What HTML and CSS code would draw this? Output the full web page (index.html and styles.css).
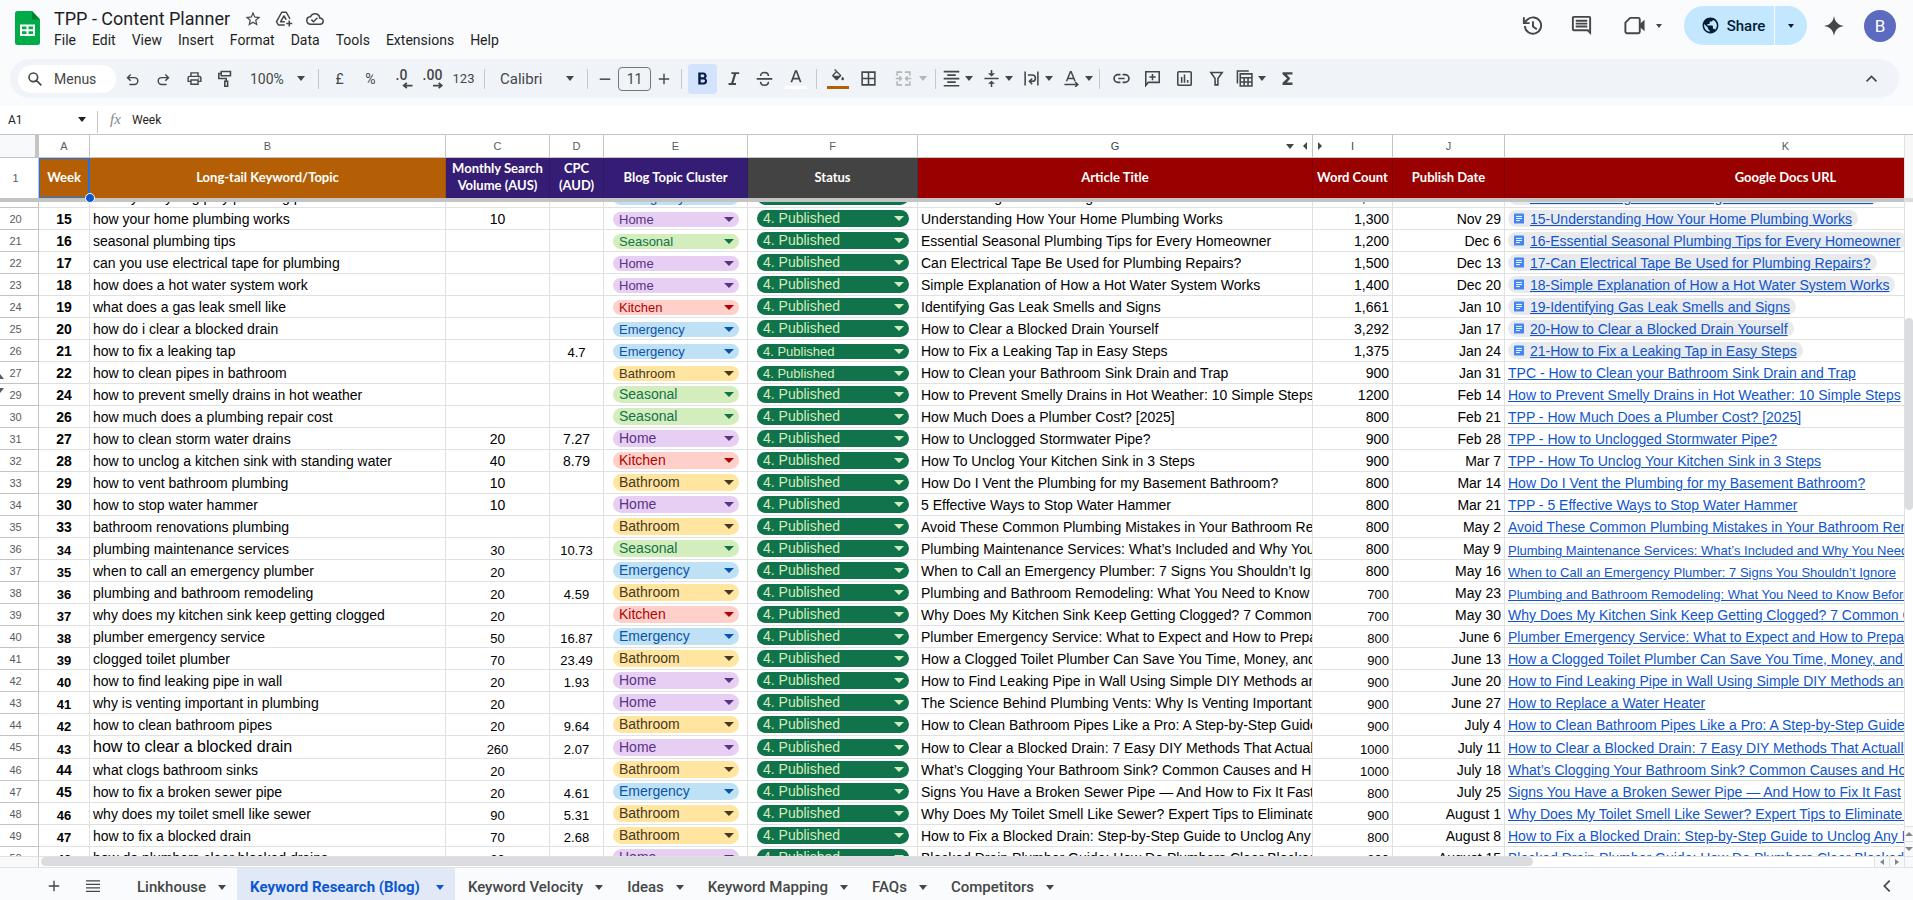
FILE: index.html
```html
<!DOCTYPE html>
<html lang="en">
<head>
<meta charset="utf-8">
<title>TPP - Content Planner</title>
<link rel="stylesheet" href="styles.css">
</head>
<body>
<svg class="sprite" aria-hidden="true">
  <symbol id="star" viewBox="0 0 24 24"><path fill="currentColor" d="M22 9.24l-7.19-.62L12 2 9.19 8.63 2 9.24l5.46 4.73L5.82 21 12 17.27 18.18 21l-1.63-7.03L22 9.24zM12 15.4l-3.76 2.27 1-4.28-3.32-2.88 4.38-.38L12 6.1l1.71 4.04 4.38.38-3.32 2.88 1 4.28L12 15.4z"/></symbol>
  <symbol id="drive" viewBox="0 0 24 24"><g fill="none" stroke="currentColor" stroke-width="2" stroke-linejoin="round"><path d="M13 20H4.500L2 15.500 9 3h6l5 9"/><path d="M13 15.500H7.500L12 8l3 5"/><path d="M19 14v8M15 18h8"/></g></symbol>
  <symbol id="cloud" viewBox="0 0 24 24"><path fill="currentColor" d="M19.350 10.040A7.490 7.490 0 0 0 12 4C9.110 4 6.600 5.640 5.350 8.040A5.994 5.994 0 0 0 0 14c0 3.310 2.690 6 6 6h13c2.760 0 5-2.240 5-5 0-2.640-2.050-4.780-4.650-4.960zM19 18H6c-2.210 0-4-1.790-4-4 0-2.050 1.530-3.760 3.560-3.970l1.070-.110.500-.950A5.469 5.469 0 0 1 12 6c2.620 0 4.880 1.860 5.390 4.430l.300 1.500 1.530.110A2.980 2.980 0 0 1 22 15c0 1.650-1.350 3-3 3zm-9-3.820l-2.090-2.090L6.500 13.500 10 17l6.010-6.010-1.410-1.410z"/></symbol>
  <symbol id="history" viewBox="0 0 24 24"><g fill="none" stroke="currentColor" stroke-width="2"><path d="M4 12.500A8.500 8.500 0 1 0 6.500 6L3.500 9"/><path d="M3 3.500V9.500H9"/><path d="M12.500 7.500V13l4 3"/></g></symbol>
  <symbol id="comment" viewBox="0 0 24 24"><path fill="currentColor" d="M22 4a2 2 0 0 0-2-2H4a2 2 0 0 0-2 2v12a2 2 0 0 0 2 2h14l4 4V4zm-2 0v13l-1-1H4V4h16zM6 12h12v2H6zm0-3h12v2H6zm0-3h12v2H6z"/></symbol>
  <symbol id="video" viewBox="0 0 24 24"><path fill="none" stroke="currentColor" stroke-width="2" stroke-linejoin="round" d="M7.500 4H16a1.500 1.500 0 0 1 1.500 1.500v13A1.500 1.500 0 0 1 16 20H4a1.500 1.500 0 0 1-1.500-1.500V9z"/><path fill="currentColor" d="M17.500 10.500l5-4.500v12l-5-4.500z"/></symbol>
  <symbol id="globe" viewBox="0 0 24 24"><path fill="currentColor" d="M12 2C6.480 2 2 6.480 2 12s4.480 10 10 10 10-4.480 10-10S17.520 2 12 2zm-1 17.930c-3.950-.490-7-3.850-7-7.930 0-.620.080-1.210.210-1.790L9 15v1c0 1.100.900 2 2 2v1.930zm6.900-2.540c-.260-.810-1-1.390-1.900-1.390h-1v-3c0-.550-.450-1-1-1H8v-2h2c.550 0 1-.450 1-1V7h2c1.100 0 2-.900 2-2v-.410c2.930 1.190 5 4.060 5 7.410 0 2.080-.800 3.970-2.100 5.390z"/></symbol>
  <symbol id="spark" viewBox="0 0 24 24"><path fill="currentColor" d="M12 0C13 7 17 11 24 12 17 13 13 17 12 24 11 17 7 13 0 12 7 11 11 7 12 0z"/></symbol>
  <symbol id="search" viewBox="0 0 24 24"><path fill="none" stroke="currentColor" stroke-width="2.400" d="M16 9.500a6.500 6.500 0 1 1-13 0 6.500 6.500 0 0 1 13 0zM14 14l7.500 7.500"/></symbol>
  <symbol id="undo" viewBox="0 0 24 24"><path fill="none" stroke="currentColor" stroke-width="2.300" d="M7 20h8a5 5 0 0 0 0-11H4M9 4L4 9l5 5"/></symbol>
  <symbol id="redo" viewBox="0 0 24 24"><path fill="none" stroke="currentColor" stroke-width="2.300" d="M17 20H9A5 5 0 0 1 9 9h11M15 4l5 5-5 5"/></symbol>
  <symbol id="print" viewBox="0 0 24 24"><path fill="currentColor" d="M19 8h-1V3H6v5H5c-1.660 0-3 1.340-3 3v6h4v4h12v-4h4v-6c0-1.660-1.340-3-3-3zM8 5h8v3H8V5zm8 12v2H8v-4h8v2zm2-2v-2H6v2H4v-4c0-.550.450-1 1-1h14c.550 0 1 .450 1 1v4h-2z"/><circle cx="18" cy="11.500" r="1" fill="currentColor"/></symbol>
  <symbol id="paint" viewBox="0 0 24 24"><path fill="none" stroke="currentColor" stroke-width="2.200" d="M6 2h13v6H6zM6 5H2.500v7H13v4"/><path fill="none" stroke="currentColor" stroke-width="2.200" d="M11 16h4v7h-4z"/></symbol>
  <symbol id="minus" viewBox="0 0 24 24"><path fill="currentColor" d="M3 11h18v2.600H3z"/></symbol>
  <symbol id="plus" viewBox="0 0 24 24"><path fill="currentColor" d="M3 10.800h7.800V3h2.400v7.800H21v2.400h-7.800V21h-2.400v-7.800H3z"/></symbol>
  <symbol id="bold" viewBox="0 0 24 24"><path fill="currentColor" d="M16.200 11.500c1-.800 1.700-2 1.700-3.200C17.900 5.500 15.900 3.500 13.200 3.500H6v17h8c2.500 0 4.500-2 4.500-4.500 0-2-.900-3.500-2.300-4.500zM9.500 6.500h3.300a1.800 1.800 0 0 1 0 3.600H9.500V6.500zm4 11h-4v-4h4a2 2 0 0 1 0 4z"/></symbol>
  <symbol id="italic" viewBox="0 0 24 24"><path fill="currentColor" d="M9 3v2.700h3.600L8.700 18.300H5V21h10.500v-2.700h-3.600l3.900-12.600H20V3z"/></symbol>
  <symbol id="strike" viewBox="0 0 24 24"><path fill="none" stroke="currentColor" stroke-width="2.200" d="M1 12.500h22M17.500 8.500c0-3-2-5-5.500-5s-5.500 2-5.500 5M6.500 16.500c0 3 2 5 5.500 5s5.500-2 5.500-5"/></symbol>
  <symbol id="letter" viewBox="0 0 24 24"><path fill="none" stroke="currentColor" stroke-width="2.500" d="M5 20l6.300-17h1.400L19 20M7.500 14.500h9"/></symbol>
  <symbol id="bucket" viewBox="0 0 24 24"><path fill="currentColor" d="M16.560 8.940L7.620 0 6.210 1.410l2.380 2.380-5.150 5.150a1.490 1.490 0 0 0 0 2.120l5.500 5.500c.290.290.680.440 1.060.440s.770-.150 1.060-.440l5.500-5.500c.590-.580.590-1.530 0-2.120zM5.210 10L10 5.210 14.790 10H5.210zM19 11.500s-2 2.170-2 3.500a2 2 0 0 0 4 0c0-1.330-2-3.500-2-3.500z"/></symbol>
  <symbol id="borders" viewBox="0 0 24 24"><path fill="none" stroke="currentColor" stroke-width="2.200" d="M3 3h18v18H3zM12 3v18M3 12h18"/></symbol>
  <symbol id="merge" viewBox="0 0 24 24"><path fill="none" stroke="currentColor" stroke-width="2.200" d="M10 3H3v5M14 3h7v5M10 21H3v-5M14 21h7v-5M1 12h8M23 12h-8M6 9l3 3-3 3M18 9l-3 3 3 3"/></symbol>
  <symbol id="center" viewBox="0 0 24 24"><path fill="currentColor" d="M1 1h22v2.400H1zM6 6h12v2.400H6zM1 11h22v2.400H1zM6 16h12v2.400H6zM1 21h22v2.400H1z"/></symbol>
  <symbol id="middle" viewBox="0 0 24 24"><path fill="none" stroke="currentColor" stroke-width="2.200" d="M2 12h20M12 0v6M12 24v-6"/><path fill="currentColor" d="M7 4.500h10L12 9zM7 19.500h10L12 15z"/></symbol>
  <symbol id="wrap" viewBox="0 0 24 24"><path fill="none" stroke="currentColor" stroke-width="2.200" d="M3 2v20M21 2v20M7 7h6a4 4 0 0 1 0 9h-3M13 12l-4 4 4 4"/></symbol>
  <symbol id="rotate" viewBox="0 0 24 24"><path fill="none" stroke="currentColor" stroke-width="2.100" d="M5 16L10.500 2.500h1L17 16M7 12h8M2 20.500h18M17 17l4 3.500-4 3.500"/></symbol>
  <symbol id="link" viewBox="0 0 24 24"><path fill="none" stroke="currentColor" stroke-width="2.400" d="M10.500 6.500H7a5.500 5.500 0 0 0 0 11h3.500M13.500 6.500H17a5.500 5.500 0 0 1 0 11h-3.500M7.500 12h9"/></symbol>
  <symbol id="addcomment" viewBox="0 0 24 24"><path fill="none" stroke="currentColor" stroke-width="2.200" d="M2.500 22V2.500h19v15H6zM12 5.500v9M7.500 10h9"/></symbol>
  <symbol id="chart" viewBox="0 0 24 24"><path fill="none" stroke="currentColor" stroke-width="2.200" d="M4 2.500h16a1.500 1.500 0 0 1 1.500 1.500v16a1.500 1.500 0 0 1-1.500 1.500H4A1.500 1.500 0 0 1 2.500 20V4A1.500 1.500 0 0 1 4 2.500zM8 10v8M12 6.500V18M16.500 14v4"/></symbol>
  <symbol id="filter" viewBox="0 0 24 24"><path fill="none" stroke="currentColor" stroke-width="2.200" d="M4 3.500h16L14 12v9h-4v-9z"/></symbol>
  <symbol id="tables" viewBox="0 0 24 24"><path fill="none" stroke="currentColor" stroke-width="2.200" d="M18 1.500H2V19M6 5.500h16.500v17H6zM6 11h16.500M6 17h16.500M11.500 11v11.500M17 11v11.500"/></symbol>
  <symbol id="sigma" viewBox="0 0 24 24"><path fill="currentColor" d="M19 3H5v3l6.500 6L5 18v3h14v-3.500h-8L16 12l-5-5.500h8z"/></symbol>
  <symbol id="up" viewBox="0 0 24 24"><path fill="none" stroke="currentColor" stroke-width="2.400" d="M5 16l7-7 7 7"/></symbol>
  <symbol id="left" viewBox="0 0 24 24"><path fill="none" stroke="currentColor" stroke-width="2.600" d="M16 4l-8 8 8 8"/></symbol>
  <symbol id="list" viewBox="0 0 24 24"><path fill="currentColor" d="M0 2h24v2.400H0zM0 8h24v2.400H0zM0 14h24v2.400H0zM0 20h24v2.400H0z"/></symbol>
  <symbol id="arrowl" viewBox="0 0 24 8"><path fill="none" stroke="currentColor" stroke-width="2" d="M24 4H14M17.500 1L14 4l3.500 3"/></symbol>
  <symbol id="arrowr" viewBox="0 0 24 8"><path fill="none" stroke="currentColor" stroke-width="2" d="M12 4h10M18.500 1L22 4l-3.500 3"/></symbol>
  <symbol id="doc" viewBox="0 0 12 12"><rect width="12" height="12" rx="1" fill="#4285f4"/><path stroke="#fff" stroke-width="1.200" d="M2.500 3.500h7M2.500 6h7M2.500 8.500h4.500"/></symbol>
</svg>

<header class="top">
  <svg class="logo" viewBox="0 0 25 34" aria-hidden="true"><path fill="#00ac47" d="M2.500 0H17l8 8.500V31.500a2.500 2.500 0 0 1-2.500 2.500h-20A2.500 2.500 0 0 1 0 31.500v-29A2.500 2.500 0 0 1 2.500 0z"/><path fill="#00832d" d="M17 0l8 8.500h-8z"/><path fill="#fff" fill-rule="evenodd" d="M5 13.500h15V25H5zM7 15.500v2.700h4.500v-2.700zM13.500 15.500v2.700H18v-2.700zM7 20.300V23h4.500v-2.700zM13.500 20.300V23H18v-2.700z"/></svg>
  <div class="heading">
    <div class="title-line">
      <h1>TPP - Content Planner</h1>
      <button class="mini" aria-label="Star"><svg><use href="#star"/></svg></button>
      <button class="mini" aria-label="Add shortcut to Drive"><svg><use href="#drive"/></svg></button>
      <button class="mini" aria-label="Document status"><svg><use href="#cloud"/></svg></button>
    </div>
    <nav class="menubar">
      <button>File</button><button>Edit</button><button>View</button><button>Insert</button><button>Format</button><button>Data</button><button>Tools</button><button>Extensions</button><button>Help</button>
    </nav>
  </div>
  <div class="actions">
    <button class="act" aria-label="Version history"><svg><use href="#history"/></svg></button>
    <button class="act" aria-label="Comments"><svg><use href="#comment"/></svg></button>
    <button class="act meet" aria-label="Join a call"><svg><use href="#video"/></svg><i class="tri small"></i></button>
    <div class="share">
      <button class="share-main"><svg><use href="#globe"/></svg>Share</button>
      <button class="share-more" aria-label="Share options"><i class="tri small"></i></button>
    </div>
    <button class="act spark" aria-label="Ask Gemini"><svg><use href="#spark"/></svg></button>
    <button class="avatar">B</button>
  </div>
</header>

<div class="toolbar" role="toolbar" aria-label="Main">
  <button class="menus"><svg><use href="#search"/></svg>Menus</button>
  <button class="tool low" aria-label="Undo"><svg><use href="#undo"/></svg></button>
  <button class="tool low" aria-label="Redo"><svg><use href="#redo"/></svg></button>
  <button class="tool" aria-label="Print"><svg><use href="#print"/></svg></button>
  <button class="tool" aria-label="Paint format"><svg><use href="#paint"/></svg></button>
  <label class="pick zoom"><select aria-label="Zoom"><option>100%</option></select><i class="tri"></i></label>
  <span class="sep"></span>
  <button class="tool text">£</button>
  <button class="tool text">%</button>
  <button class="tool dec" aria-label="Decrease decimal places"><span>.0</span><svg><use href="#arrowl"/></svg></button>
  <button class="tool dec" aria-label="Increase decimal places"><span>.00</span><svg><use href="#arrowr"/></svg></button>
  <button class="tool text num">123</button>
  <span class="sep"></span>
  <label class="pick font"><select aria-label="Font"><option>Calibri</option></select><i class="tri"></i></label>
  <span class="sep"></span>
  <button class="tool step" aria-label="Decrease font size"><svg><use href="#minus"/></svg></button>
  <input class="size" aria-label="Font size" value="11">
  <button class="tool step" aria-label="Increase font size"><svg><use href="#plus"/></svg></button>
  <span class="sep"></span>
  <button class="tool on" aria-label="Bold"><svg><use href="#bold"/></svg></button>
  <button class="tool" aria-label="Italic"><svg><use href="#italic"/></svg></button>
  <button class="tool" aria-label="Strikethrough"><svg><use href="#strike"/></svg></button>
  <button class="tool swatch white" aria-label="Text color"><svg><use href="#letter"/></svg></button>
  <span class="sep"></span>
  <button class="tool swatch orange" aria-label="Fill color"><svg><use href="#bucket"/></svg></button>
  <button class="tool" aria-label="Borders"><svg><use href="#borders"/></svg></button>
  <button class="split merge" aria-label="Merge cells" disabled><svg><use href="#merge"/></svg><i class="tri"></i></button>
  <span class="sep"></span>
  <div class="aligns">
    <button class="split" aria-label="Horizontal align"><svg><use href="#center"/></svg><i class="tri"></i></button>
    <button class="split" aria-label="Vertical align"><svg><use href="#middle"/></svg><i class="tri"></i></button>
    <button class="split" aria-label="Text wrapping"><svg><use href="#wrap"/></svg><i class="tri"></i></button>
    <button class="split" aria-label="Text rotation"><svg><use href="#rotate"/></svg><i class="tri"></i></button>
  </div>
  <span class="sep"></span>
  <button class="tool wide" aria-label="Insert link"><svg><use href="#link"/></svg></button>
  <button class="tool" aria-label="Insert comment"><svg><use href="#addcomment"/></svg></button>
  <button class="tool wide" aria-label="Insert chart"><svg><use href="#chart"/></svg></button>
  <button class="tool wide" aria-label="Create a filter"><svg><use href="#filter"/></svg></button>
  <button class="split views" aria-label="Table views"><svg><use href="#tables"/></svg><i class="tri"></i></button>
  <button class="tool" aria-label="Functions"><svg><use href="#sigma"/></svg></button>
  <button class="tool collapse" aria-label="Hide the menus"><svg><use href="#up"/></svg></button>
</div>

<div class="formula">
  <input class="namebox" aria-label="Name box" value="A1">
  <i class="tri"></i>
  <span class="sep"></span>
  <span class="fx">fx</span>
  <input class="entry" aria-label="Formula" value="Week">
</div>

<main class="grid">
  <div class="sheet">
    <div class="frozen">
      <table>
        <colgroup><col class="h"><col class="a"><col class="b"><col class="c"><col class="d"><col class="e"><col class="f"><col class="g"><col class="i"><col class="j"><col class="k"></colgroup>
        <thead>
          <tr class="letters"><th class="corner"></th><th>A</th><th>B</th><th>C</th><th>D</th><th>E</th><th>F</th><th><div class="lettered"><span></span><span>G</span><span class="marks"><i class="tri"></i><i class="tri west"></i></span></div></th><th><div class="lettered"><i class="tri east"></i><span>I</span><span></span></div></th><th>J</th><th>K</th></tr>
        </thead>
        <tbody>
          <tr class="titles"><th class="rownum">1</th><td class="orange">Week<span class="handle"></span></td><td class="orange">Long-tail Keyword/Topic</td><td class="purple">Monthly Search<br>Volume (AUS)</td><td class="purple">CPC<br>(AUD)</td><td class="purple">Blog Topic Cluster</td><td class="grey">Status</td><td class="red">Article Title</td><td class="red">Word Count</td><td class="red">Publish Date</td><td class="red">Google Docs URL</td></tr>
        </tbody>
      </table>
    </div>
    <div class="scroller">
      <table class="body">
        <colgroup><col class="h"><col class="a"><col class="b"><col class="c"><col class="d"><col class="e"><col class="f"><col class="g"><col class="i"><col class="j"><col class="k"></colgroup>
        <tbody id="rows"></tbody>
      </table>
    </div>
    <div class="hbar"><span class="gutter"></span><span class="track"><span class="thumb"></span></span><button aria-label="Scroll left"><i class="tri west"></i></button><button aria-label="Scroll right"><i class="tri east"></i></button></div>
  </div>
  <div class="vbar"><span class="cap"></span><span class="track"><span class="thumb"></span></span><button aria-label="Scroll up"><i class="tri north"></i></button><button aria-label="Scroll down"><i class="tri"></i></button><span class="end"></span></div>
</main>

<footer class="tabs">
  <button class="icon" aria-label="Add sheet"><svg><use href="#plus"/></svg></button>
  <button class="icon all" aria-label="All sheets"><svg><use href="#list"/></svg></button>
  <button class="tab">Linkhouse<i class="tri"></i></button>
  <button class="tab current">Keyword Research (Blog)<i class="tri"></i></button>
  <button class="tab">Keyword Velocity<i class="tri"></i></button>
  <button class="tab">Ideas<i class="tri"></i></button>
  <button class="tab">Keyword Mapping<i class="tri"></i></button>
  <button class="tab">FAQs<i class="tri"></i></button>
  <button class="tab">Competitors<i class="tri"></i></button>
  <button class="icon side" aria-label="Show side panel"><svg><use href="#left"/></svg></button>
</footer>
<script src="rows.js"></script>
</body>
</html>
```
FILE: styles.css
```css
* { box-sizing: border-box; }
body { margin: 0; height: 100vh; display: flex; flex-direction: column; overflow: hidden; background: #f9fbfd; color: #444746; font-family: Roboto, "Liberation Sans", sans-serif; font-size: 14px; }
button, input, select { font: inherit; color: inherit; border: 0; padding: 0; margin: 0; background: none; outline: 0; }
button { display: flex; align-items: center; justify-content: center; white-space: nowrap; flex: none; }
.sprite { position: absolute; width: 0; height: 0; }
.tri { flex: none; width: 0; height: 0; border: 4px solid transparent; border-top: 5px solid currentColor; border-bottom: 0; }
.tri.small { border-width: 4px 3px 0; }
.tri.north { border-top: 0; border-bottom: 5px solid currentColor; }
.tri.west { border: 4px solid transparent; border-right: 4px solid currentColor; border-left: 0; }
.tri.east { border: 4px solid transparent; border-left: 4px solid currentColor; border-right: 0; }

.top { height: 59px; flex: none; display: flex; padding: 0 17px 0 15px; }
.logo { width: 25px; height: 34px; margin: 11px 14px 0 0; }
.heading { padding-top: 6px; }
.title-line { display: flex; align-items: center; height: 25px; gap: 13px; }
h1 { margin: 0 1px 0 0; font-size: 18px; line-height: 24px; font-weight: 400; color: #1f1f1f; }
.mini { width: 18px; height: 18px; }
.mini svg { width: 18px; height: 18px; }
.menubar { display: flex; height: 18px; margin-left: -8px; color: #1f1f1f; }
.menubar button { padding: 0 8px; }
.actions { margin-left: auto; display: flex; align-items: center; height: 51px; }
.act svg { width: 23px; height: 23px; }
.act { margin-right: 26px; }
.meet { gap: 10px; margin-right: 22px; padding-left: 4px; }
.share { display: flex; height: 39px; border-radius: 20px; overflow: hidden; gap: 1px; color: #001d35; font-size: 15px; font-weight: 500; margin-right: 17px; }
.share button { background: #c2e7ff; }
.share-main { width: 90px; gap: 7px; padding-left: 8px; }
.share-main svg { width: 19px; height: 19px; }
.share-more { width: 32px; }
.spark { margin-right: 20px; }
.spark svg { width: 20px; height: 20px; }
.avatar { width: 32px; height: 32px; border-radius: 16px; background: #5c6bc0; color: #fff; font-size: 17px; }

.toolbar { height: 39px; flex: none; display: flex; align-items: center; gap: 2px; margin: 0 14px 0 10px; padding: 0 8px; border-radius: 20px; background: #f0f4f9; }
.menus { width: 98px; height: 28px; border-radius: 14px; background: #fff; justify-content: flex-start; padding-left: 9px; gap: 11px; }
.menus svg { width: 16px; height: 16px; }
.tool { width: 29px; height: 30px; border-radius: 4px; }
.tool.wide { width: 30px; }
.tool svg, .split svg { width: 17px; height: 17px; flex: none; }
.tool.low { padding-top: 2px; }
.tool.low svg { width: 15px; height: 15px; }
.tool.on { background: #d3e3fd; color: #041e49; }
.tool.step { width: 22px; }
.tool.step svg { width: 14px; height: 14px; }
.tool.num { font-size: 13px; }
.tool.dec { flex-direction: column; font-size: 14px; line-height: 13px; font-weight: 500; }
.tool.dec svg { width: 22px; height: 7px; }
.tool.swatch { flex-direction: column; gap: 1px; }
.tool.swatch svg { width: 16px; height: 16px; }
.tool.swatch::after { content: ""; width: 22px; height: 3px; }
.tool.white::after { background: #fff; }
.tool.orange::after { background: #b45f06; }
.sep { flex: none; width: 1px; height: 20px; margin: 0 4px; background: #c7c7c7; }
.pick { display: flex; align-items: center; height: 28px; flex: none; }
.pick select { appearance: none; flex: 1; min-width: 0; }
.zoom { width: 70px; padding: 0 7px 0 8px; }
.font { width: 90px; padding: 0 7px 0 9px; font-size: 15px; }
.size { width: 33px; height: 24px; border: 1px solid #747775; border-radius: 4px; text-align: center; }
.split { gap: 5px; padding-left: 1px; height: 28px; }
.merge { padding: 0 2px 0 10px; gap: 7px; color: #b4b6b8; }
.aligns { display: flex; gap: 9px; }
.views { padding-left: 3px; margin-right: 5px; }
.collapse { margin: 0 5px 0 auto; }

.formula { height: 28px; margin-top: 8px; flex: none; display: flex; align-items: center; background: #fff; font-size: 12px; color: #1f1f1f; padding-bottom: 1px; }
.formula input { height: 24px; }
.namebox { width: 78px; padding-left: 8px; }
.formula .sep { margin: 4px 12px 0 11px; height: 22px; }
.fx { width: 22px; font: italic 15px "Liberation Serif", serif; color: #80868b; }
.entry { flex: 1; }

.grid { flex: 1; min-height: 0; display: flex; border-top: 1px solid #c4c4c4; background: #fff; }
.sheet { flex: 1; min-width: 0; display: flex; flex-direction: column; overflow: hidden; border-right: 1px solid #e1e1e1; }
table { table-layout: fixed; width: 2067px; border-collapse: separate; border-spacing: 0; font-family: "Liberation Sans", Arial, sans-serif; font-size: 14px; line-height: 16px; color: #000; }
.h { width: 39px; } .a { width: 51px; } .b { width: 356px; } .c { width: 104px; } .d { width: 54px; } .e { width: 144px; } .f { width: 170px; } .g { width: 395px; } .i { width: 80px; } .j { width: 112px; } .k { width: 562px; }
th, td { padding: 0; }
th { font-weight: 400; font-size: 11px; color: #575b5f; border: 0 solid #c4c4c4; border-width: 0 1px 1px 0; }
.frozen { flex: none; border-bottom: 4px solid #c4c4c4; }
.letters { height: 23px; }
.letters .corner { background: #f8f9fa; border-right-width: 4px; }
.lettered { display: grid; grid-template-columns: 1fr auto 1fr; align-items: center; padding: 0 5px; color: #444746; }
.marks { display: flex; justify-content: flex-end; align-items: center; gap: 9px; }
.titles { height: 40px; }
.titles th { border-bottom: 0; padding-right: 7px; }
.titles td { font: 700 13px/17px Lato, "Liberation Sans", sans-serif; color: #fff; text-align: center; border-right: 1px solid rgba(0, 0, 0, .12); padding-bottom: 2px; }
.titles .orange { background: #b45f06; }
.titles .purple { background: #351c75; }
.titles .grey { background: #434343; }
.titles .red { background: #990000; }
.titles td:nth-child(2) { position: relative; box-shadow: inset 1px 1px #1a73e8, inset -1px -1px #1a73e8; border-right-color: #1a73e8; }
.handle { position: absolute; right: -6px; bottom: -5px; width: 10px; height: 10px; border-radius: 5px; background: #0b57d0; border: 1px solid #fff; z-index: 1; }

.scroller { flex: 1; min-height: 0; overflow: hidden; }
.body { margin-top: -16px; }
.body tr { height: 22px; }
.body tr.tall { height: 23px; }
.body th { padding-right: 7px; position: relative; }
.body th .tri { position: absolute; left: -4px; }
.body th .north { bottom: 4px; }
.body th .south { top: 4px; }
.body td { height: 22px; padding: 0 3px 2px; vertical-align: bottom; white-space: nowrap; overflow: hidden; border: 0 solid #e1e1e1; border-width: 0 1px 1px 0; }
.body td.mid { text-align: center; }
.body td.week { text-align: center; font-weight: 700; }
.body td.end { text-align: right; }
.body td.sm { font-size: 13px; line-height: 13px; }
.body td.big { font-size: 16px; line-height: 18px; }
.body td.cell-chip { padding: 0 8px 2px 9px; }
.chip { display: flex; align-items: center; height: 17px; border-radius: 9px; padding: 0 5px 0 6px; }
.chip .tri { border-width: 5px 5px 0; }
.chip select { appearance: none; flex: 1; min-width: 0; height: 17px; line-height: 17px; }
.chip.sm { height: 15px; font-size: 13px; }
.home { background: #e6cff2; color: #5a3286; }
.seasonal { background: #d4edbc; color: #11734b; }
.kitchen { background: #ffcfc9; color: #b10202; }
.emergency { background: #bfe1f6; color: #0a53a8; }
.bathroom { background: #ffe5a0; color: #473821; }
.published { background: #11734b; color: #d4edbc; }
.body a { color: #1155cc; text-decoration: underline; }
.smart { display: inline-flex; align-items: center; gap: 6px; height: 17px; padding: 0 6px; border-radius: 9px; background: #e8eaed; vertical-align: bottom; }
.smart svg { width: 10px; height: 11px; }

.hbar { flex: none; display: flex; height: 11px; background: #fff; color: #80868b; border-top: 1px solid #e1e1e1; }
.hbar .gutter { width: 39px; background: #f8f9fa; border-right: 1px solid #d0d0d0; }
.hbar .track { flex: 1; padding: 0 0 1px 2px; }
.hbar .thumb { display: block; width: 81.4%; height: 9px; border-radius: 5px; background: #dadce0; }
.hbar button { width: 15px; border-left: 1px solid #e1e1e1; background: #f8f9fa; }
.vbar { flex: none; width: 8px; display: flex; flex-direction: column; color: #80868b; overflow: hidden; }
.vbar .cap { height: 67px; background: #f8f8f8; border-bottom: 4px solid #dadce0; }
.vbar .track { flex: 1; padding-top: 116px; }
.vbar .thumb { display: block; height: 192px; border-radius: 4px; background: #dadce0; }
.vbar button { height: 15px; background: #f8f9fa; border-top: 1px solid #e1e1e1; }
.vbar .end { height: 11px; background: #f8f9fa; border-top: 1px solid #e1e1e1; }
.hbar .tri { border-top-width: 3px; border-bottom-width: 3px; }
.vbar .tri { border-top-width: 4px; border-bottom-width: 0; }
.vbar .tri.north { border-top-width: 0; border-bottom-width: 4px; }

.tabs { flex: none; height: 33px; display: flex; border-top: 1px solid #e1e3e1; padding: 0 16px 0 44px; font-size: 15px; font-weight: 500; }
.icon { width: 20px; padding-top: 4px; }
.icon svg { width: 14px; height: 14px; }
.all { margin: 0 21px 0 19px; }
.tab { gap: 12px; padding: 6px 11px 0 13px; }
.current { background: #e1e9f7; color: #0b57d0; font-weight: 700; gap: 16px; }
.side { margin-left: auto; }
.side svg { width: 16px; height: 16px; }
```
FILE: rows.js
```js
// [row, week, keyword, volume, cpc, cluster, title, words, date, link text (empty = same as title)]
const data = [
  [19, 14, "can my early dog play plumbing parts", "", "", "Emergency", "Start Dealing with Plumbing Disasters at Home Now", "1,300", "Nov 22", "14-Start Dealing with Plumbing Disasters at Home Now"],
  [20, 15, "how your home plumbing works", "10", "", "Home", "Understanding How Your Home Plumbing Works", "1,300", "Nov 29", "15-Understanding How Your Home Plumbing Works"],
  [21, 16, "seasonal plumbing tips", "", "", "Seasonal", "Essential Seasonal Plumbing Tips for Every Homeowner", "1,200", "Dec 6", "16-Essential Seasonal Plumbing Tips for Every Homeowner"],
  [22, 17, "can you use electrical tape for plumbing", "", "", "Home", "Can Electrical Tape Be Used for Plumbing Repairs?", "1,500", "Dec 13", "17-Can Electrical Tape Be Used for Plumbing Repairs?"],
  [23, 18, "how does a hot water system work", "", "", "Home", "Simple Explanation of How a Hot Water System Works", "1,400", "Dec 20", "18-Simple Explanation of How a Hot Water System Works"],
  [24, 19, "what does a gas leak smell like", "", "", "Kitchen", "Identifying Gas Leak Smells and Signs", "1,661", "Jan 10", "19-Identifying Gas Leak Smells and Signs"],
  [25, 20, "how do i clear a blocked drain", "", "", "Emergency", "How to Clear a Blocked Drain Yourself", "3,292", "Jan 17", "20-How to Clear a Blocked Drain Yourself"],
  [26, 21, "how to fix a leaking tap", "", "4.7", "Emergency", "How to Fix a Leaking Tap in Easy Steps", "1,375", "Jan 24", "21-How to Fix a Leaking Tap in Easy Steps"],
  [27, 22, "how to clean pipes in bathroom", "", "", "Bathroom", "How to Clean your Bathroom Sink Drain and Trap", "900", "Jan 31", "TPC - How to Clean your Bathroom Sink Drain and Trap"],
  [29, 24, "how to prevent smelly drains in hot weather", "", "", "Seasonal", "How to Prevent Smelly Drains in Hot Weather: 10 Simple Steps", "1200", "Feb 14", ""],
  [30, 26, "how much does a plumbing repair cost", "", "", "Seasonal", "How Much Does a Plumber Cost? [2025]", "800", "Feb 21", "TPP - How Much Does a Plumber Cost? [2025]"],
  [31, 27, "how to clean storm water drains", "20", "7.27", "Home", "How to Unclogged Stormwater Pipe?", "900", "Feb 28", "TPP - How to Unclogged Stormwater Pipe?"],
  [32, 28, "how to unclog a kitchen sink with standing water", "40", "8.79", "Kitchen", "How To Unclog Your Kitchen Sink in 3 Steps", "900", "Mar 7", "TPP - How To Unclog Your Kitchen Sink in 3 Steps"],
  [33, 29, "how to vent bathroom plumbing", "10", "", "Bathroom", "How Do I Vent the Plumbing for my Basement Bathroom?", "800", "Mar 14", ""],
  [34, 30, "how to stop water hammer", "10", "", "Home", "5 Effective Ways to Stop Water Hammer", "800", "Mar 21", "TPP - 5 Effective Ways to Stop Water Hammer"],
  [35, 33, "bathroom renovations plumbing", "", "", "Bathroom", "Avoid These Common Plumbing Mistakes in Your Bathroom Renovation", "800", "May 2", ""],
  [36, 34, "plumbing maintenance services", "30", "10.73", "Seasonal", "Plumbing Maintenance Services: What’s Included and Why You Need Them", "800", "May 9", ""],
  [37, 35, "when to call an emergency plumber", "20", "", "Emergency", "When to Call an Emergency Plumber: 7 Signs You Shouldn’t Ignore", "800", "May 16", ""],
  [38, 36, "plumbing and bathroom remodeling", "20", "4.59", "Bathroom", "Plumbing and Bathroom Remodeling: What You Need to Know Before You Start", "700", "May 23", ""],
  [39, 37, "why does my kitchen sink keep getting clogged", "20", "", "Kitchen", "Why Does My Kitchen Sink Keep Getting Clogged? 7 Common Causes", "700", "May 30", ""],
  [40, 38, "plumber emergency service", "50", "16.87", "Emergency", "Plumber Emergency Service: What to Expect and How to Prepare", "800", "June 6", ""],
  [41, 39, "clogged toilet plumber", "70", "23.49", "Bathroom", "How a Clogged Toilet Plumber Can Save You Time, Money, and Stress", "900", "June 13", ""],
  [42, 40, "how to find leaking pipe in wall", "20", "1.93", "Home", "How to Find Leaking Pipe in Wall Using Simple DIY Methods and Tools", "900", "June 20", ""],
  [43, 41, "why is venting important in plumbing", "20", "", "Home", "The Science Behind Plumbing Vents: Why Is Venting Important in Plumbing", "900", "June 27", "How to Replace a Water Heater"],
  [44, 42, "how to clean bathroom pipes", "20", "9.64", "Bathroom", "How to Clean Bathroom Pipes Like a Pro: A Step-by-Step Guide", "900", "July 4", ""],
  [45, 43, "how to clear a blocked drain", "260", "2.07", "Home", "How to Clear a Blocked Drain: 7 Easy DIY Methods That Actually Work", "1000", "July 11", ""],
  [46, 44, "what clogs bathroom sinks", "20", "", "Bathroom", "What’s Clogging Your Bathroom Sink? Common Causes and How to Fix It", "1000", "July 18", ""],
  [47, 45, "how to fix a broken sewer pipe", "20", "4.61", "Emergency", "Signs You Have a Broken Sewer Pipe — And How to Fix It Fast", "800", "July 25", ""],
  [48, 46, "why does my toilet smell like sewer", "90", "5.31", "Bathroom", "Why Does My Toilet Smell Like Sewer? Expert Tips to Eliminate Odors", "900", "August 1", ""],
  [49, 47, "how to fix a blocked drain", "70", "2.68", "Bathroom", "How to Fix a Blocked Drain: Step-by-Step Guide to Unclog Any Drain", "800", "August 8", ""],
  [50, 48, "how do plumbers clear blocked drains", "20", "", "Home", "Blocked Drain Plumber Guide: How Do Plumbers Clear Blocked Drains", "800", "August 15", ""]
];

const chip = (text, kind, small, label) =>
  `<td class="cell-chip"><div class="chip ${kind}${small ? " sm" : ""}"><select aria-label="${label}"><option>${text}</option></select><i class="tri"></i></div></td>`;

document.getElementById("rows").innerHTML = data.map(([n, week, key, vol, cpc, cluster, title, words, date, url]) => {
  const late = n >= 36 ? " sm" : "";
  const mark = n === 27 ? '<i class="tri north"></i>' : n === 29 ? '<i class="tri south"></i>' : "";
  const link = n <= 26
    ? `<a class="smart" href="#"><svg><use href="#doc"/></svg>${url}</a>`
    : `<a href="#">${url || title}</a>`;
  return `<tr${n === 45 ? ' class="tall"' : ""}><th>${mark}${n}</th>
    <td class="week${n >= 36 && n !== 46 && n !== 47 ? " sm" : ""}">${week}</td>
    <td${n === 45 ? ' class="big"' : ""}>${key}</td>
    <td class="mid${late}">${vol}</td>
    <td class="mid${late || (n === 26 ? " sm" : "")}">${cpc}</td>
    ${chip(cluster, cluster.toLowerCase(), n <= 27, "Blog topic cluster")}
    ${chip("4. Published", "published", n === 26 || n === 27, "Status")}
    <td>${title}</td>
    <td class="end${n >= 38 ? " sm" : ""}">${words}</td>
    <td class="end">${date}</td>
    <td class="${n >= 36 && n <= 38 ? "sm" : "link"}">${link}</td></tr>`;
}).join("");
```
